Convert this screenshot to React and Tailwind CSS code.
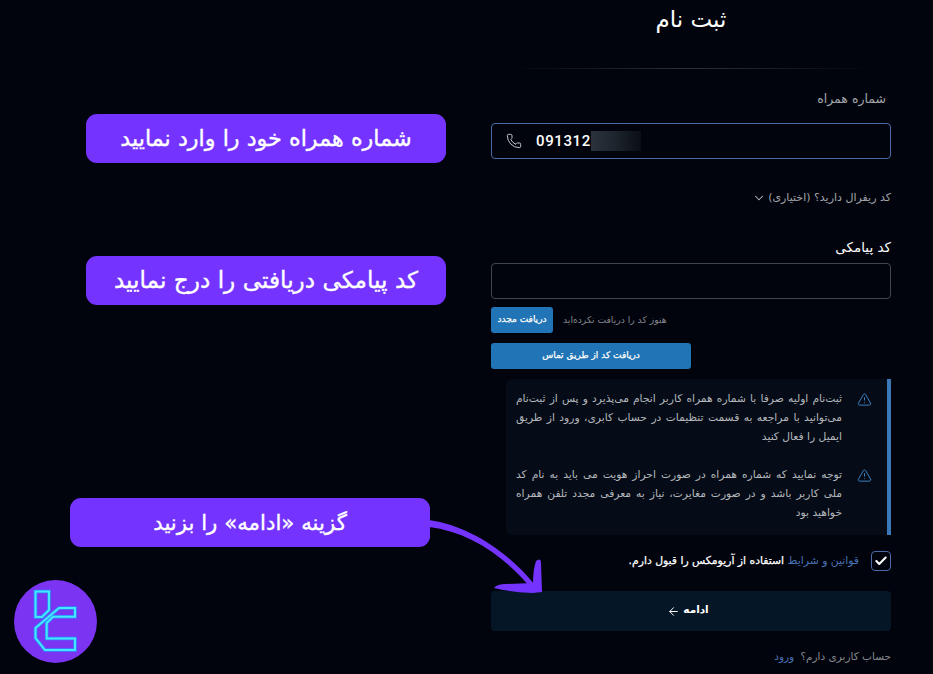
import React from "react";
import { Phone, ChevronDown, TriangleAlert, ArrowLeft, Check } from "lucide-react";

const font = "font-['DejaVu_Sans',sans-serif]";

function Note({ children }) {
  return (
    <div className="flex items-start gap-[15px]">
      <TriangleAlert className="w-[15px] h-[15px] mt-[3px] shrink-0 text-[#3b7fbd]" strokeWidth={1.6} />
      <p className="w-[326px] text-[10.7px] leading-[19px] text-[#b4b7bc] tracking-[-0.1px] text-justify">{children}</p>
    </div>
  );
}

function Annotation({ className, children }) {
  return (
    <div
      dir="rtl"
      className={`absolute h-[49px] w-[360px] rounded-[11px] bg-[#7433ff] flex items-center justify-center text-white [-webkit-text-stroke:0.35px_white] ${className}`}
    >
      {children}
    </div>
  );
}

export default function App() {
  return (
    <div className={`relative w-[933px] h-[674px] overflow-hidden bg-[#01040d] ${font}`}>
      <main dir="rtl" className="ml-auto mr-[42px] w-[400px] h-full flex flex-col">
        <h1 className="mt-[2px] h-[34px] text-center text-[23px] leading-[34px] text-white">ثبت نام</h1>
        <div className="mt-[32px] mx-[16px] h-px bg-gradient-to-r from-transparent via-[#2c3038] to-transparent" />
        <label className="mt-[20px] mr-[5px] h-[20px] text-[12.5px] leading-[20px] text-[#a2a5ab]">شماره همراه</label>
        <div dir="ltr" className="mt-[14px] h-[36px] shrink-0 rounded-[4px] border border-[#4a6aa8] flex items-center pl-[14px]">
          <Phone className="w-[16px] h-[16px] text-[#c4c6ca]" strokeWidth={1.5} />
          <span className="ml-[14px] text-[15px] font-['Roboto',sans-serif] font-medium tracking-[0.6px] text-white">091312</span>
          <span className="w-[50px] h-[20px] bg-gradient-to-r from-[#2a333c] via-[#1c242c] to-[#0a0e16]" />
        </div>
        <div className="mt-[30px] flex items-center gap-[2px] h-[18px] text-[11px] text-[#a2a5ab]">
          <span>کد ریفرال دارید؟ (اختیاری)</span>
          <ChevronDown className="w-[14px] h-[14px] text-[#b8bbc0]" strokeWidth={1.8} />
        </div>
        <label className="mt-[31px] h-[18px] text-[13.5px] leading-[18px] text-white">کد پیامکی</label>
        <div className="mt-[7px] h-[36px] shrink-0 rounded-[4px] border border-[#43464e]" />
        <div className="mt-[8px] flex items-center flex-row-reverse justify-start gap-[10px]">
          <button className="w-[62px] h-[26px] rounded-[3px] bg-[#2174b5] text-white text-[9px] [-webkit-text-stroke:0.25px_white]">دریافت مجدد</button>
          <span className="text-[9.2px] text-[#85888e]">هنوز کد را دریافت نکرده‌اید</span>
        </div>
        <button className="mt-[10px] self-end w-[200px] h-[26px] rounded-[3px] bg-[#2174b5] text-white text-[9px] [-webkit-text-stroke:0.25px_white]">دریافت کد از طریق تماس</button>
        <section className="mt-[10px] ml-[15px] h-[156px] shrink-0 rounded-l-[6px] border-r-[4px] border-[#3a78b8] bg-[#050c17] pr-[15px] pt-[10px] flex flex-col gap-[19px]">
          <Note>ثبت‌نام اولیه صرفا با شماره همراه کاربر انجام می‌پذیرد و پس از ثبت‌نام می‌توانید با مراجعه به قسمت تنظیمات در حساب کابری، ورود از طریق ایمیل را فعال کنید</Note>
          <Note>توجه نمایید که شماره همراه در صورت احراز هویت می باید به نام کد ملی کاربر باشد و در صورت مغایرت، نیاز به معرفی مجدد تلفن همراه خواهید بود</Note>
        </section>
        <div className="mt-[16px] flex items-center gap-[12px] h-[20px]">
          <span className="w-[20px] h-[20px] rounded-[4px] border border-[#4a6aa8] flex items-center justify-center">
            <Check className="w-[14px] h-[14px] text-white" strokeWidth={3.5} />
          </span>
          <span className="text-[10.8px] text-white [-webkit-text-stroke:0.25px_white]">
            <span className="text-[#4a73b5] [-webkit-text-stroke:0]">قوانین و شرایط</span> استفاده از آریومکس را قبول دارم.
          </span>
        </div>
        <button className="mt-[20px] h-[40px] shrink-0 rounded-[4px] bg-[#051726] text-white text-[10.5px] font-bold flex items-center justify-center gap-[3px] pr-[6px] pb-[2px]">
          ادامه
          <ArrowLeft className="w-[13px] h-[13px] mt-[2px]" strokeWidth={1.8} />
        </button>
        <p className="mt-[18px] text-[10.5px] text-[#85888e]">
          حساب کاربری دارم؟ <span className="mr-[3px] text-[#4a73b5]">ورود</span>
        </p>
      </main>

      <Annotation className="left-[86px] top-[114px] text-[22.3px]">شماره همراه خود را وارد نمایید</Annotation>
      <Annotation className="left-[86px] top-[256px] text-[23.2px]">کد پیامکی دریافتی را درج نمایید</Annotation>
      <Annotation className="left-[70px] top-[498px] text-[21.3px]">گزینه «ادامه» را بزنید</Annotation>

      <svg className="absolute left-[425px] top-[515px] w-[130px] h-[80px]" viewBox="425 515 130 80" fill="#7433ff">
        <path d="M429 520 C470 526 508 552 535 585 L535 593 C505 556 470 532 429 527 Z" />
        <path d="M536 561 Q541 557 541 563 L542 592 L532 593 Q510 592 494 588 Q497 584 506 584 L533 583 Q533 570 536 561 Z" />
      </svg>

      <div className="absolute left-[14px] top-[580px] w-[83px] h-[83px] rounded-full bg-[#7a34f2]">
        <svg viewBox="14 10 83 83" className="w-full h-full" fill="none" strokeLinejoin="miter">
          <g stroke="#2a8cff" strokeWidth="3.6">
            <path d="M35.5 21.5 H49 V40 L42 47 H35.5 Z" />
            <path d="M59 38 H75 V46.7 H53 L46.7 53 V68.5 H75 V80 H45 L35.5 68 V58 Z" />
          </g>
          <g stroke="#45e6ff" strokeWidth="2">
            <path d="M35.5 21.5 H49 V40 L42 47 H35.5 Z" />
            <path d="M59 38 H75 V46.7 H53 L46.7 53 V68.5 H75 V80 H45 L35.5 68 V58 Z" />
          </g>
        </svg>
      </div>
    </div>
  );
}
